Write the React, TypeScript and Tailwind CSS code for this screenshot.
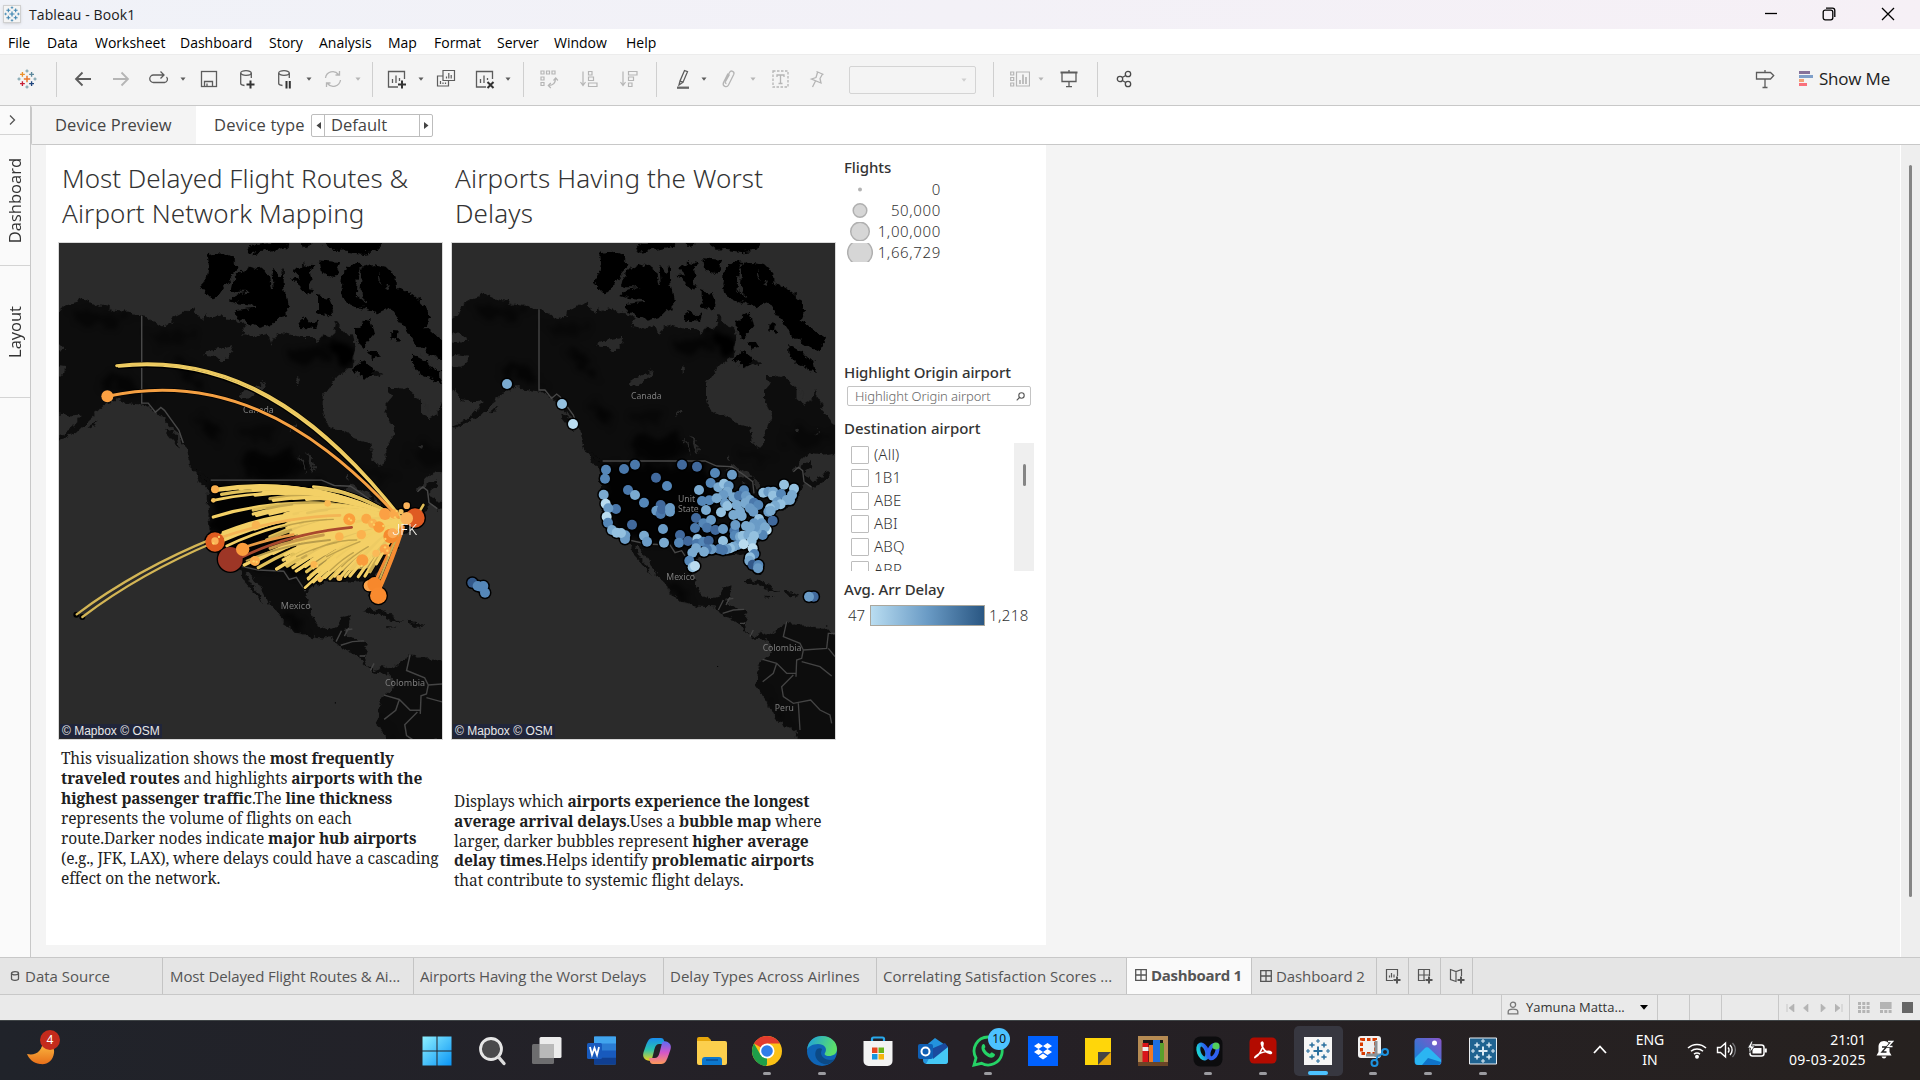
import React from "react";

type Pt = [number, number];

const SANS = "font-['Open_Sans','Noto_Sans',sans-serif]";

/* ---------- small helpers ---------- */

function Ico({ children, className = "", size = 20 }: { children: React.ReactNode; className?: string; size?: number }) {
  return (
    <svg width={size} height={size} viewBox={`0 0 ${size} ${size}`} fill="none" stroke="currentColor" strokeWidth={1.3} className={"block shrink-0 " + className}>
      {children}
    </svg>
  );
}

function Caret({ className = "" }: { className?: string }) {
  return (
    <svg width="8" height="8" viewBox="0 0 8 8" className={"block shrink-0 " + className}>
      <path d="M1.5 2.5h5L4 5.8z" fill="currentColor" />
    </svg>
  );
}

const Sep = ({ className = "" }: { className?: string }) => <div className={"h-[35px] w-px shrink-0 bg-[#cfcfcf] " + className} />;

function plus(cx: number, cy: number, r: number) {
  return `M${cx - r} ${cy}h${r * 2}M${cx} ${cy - r}v${r * 2}`;
}

/* the cluster-of-crosses mark */
function Crosses({ size, colors, className = "" }: { size: number; colors: string[]; className?: string }) {
  const [mid, a, b, c, d, s] = colors;
  return (
    <svg width={size} height={size} viewBox="0 0 24 24" fill="none" className={"block shrink-0 " + className}>
      <path d={plus(12, 12, 3.8)} stroke={mid} strokeWidth="1.8" />
      <path d={plus(6.5, 6.5, 2.9)} stroke={a} strokeWidth="1.6" />
      <path d={plus(17.5, 6.5, 2.9)} stroke={b} strokeWidth="1.6" />
      <path d={plus(6.5, 17.5, 2.9)} stroke={c} strokeWidth="1.6" />
      <path d={plus(17.5, 17.5, 2.9)} stroke={d} strokeWidth="1.6" />
      <path d={plus(12, 2.4, 1.9) + plus(12, 21.6, 1.9) + plus(2.4, 12, 1.9) + plus(21.6, 12, 1.9)} stroke={s} strokeWidth="1.2" />
    </svg>
  );
}

/* ---------- base map ---------- */

const MAINLAND =
  "M20 265L50 258L60 235L70 225L95 208L120 202L130 188L150 200L165 205L178 212L200 215L225 225L265 228L297 240L315 243L340 258L355 267L375 262L385 240L410 232L425 222L440 215L450 235L470 250L476 228L480 245L500 238L515 235L530 245L560 250L590 265L575 280L580 292L610 298L640 285L650 300L656 324L662 300L680 285L705 290L740 297L770 297L785 312L800 290L820 300L830 285L835 250L850 275L865 290L875 285L880 310L890 315L882 350L878 385L860 390L840 405L820 430L798 460L798 510L815 545L850 555L880 575L915 587L930 590L938 635L955 655L970 650L968 610L985 590L995 560L985 530L975 510L975 480L988 465L978 435L1010 435L1035 445L1055 455L1070 480L1070 505L1095 522L1115 510L1122 480L1140 515L1155 550L1175 580L1215 610L1215 665L1140 675L1100 672L1080 692L1065 712L1060 725L1085 705L1110 690L1115 715L1090 735L1110 745L1130 752L1160 720L1172 728L1145 760L1120 775L1095 760L1080 785L1062 825L1020 838L1000 860L1005 880L985 920L955 940L942 962L960 1000L968 1030L946 1030L925 1005L910 968L860 975L810 975L780 982L755 1005L757 1030L765 1060L785 1093L815 1102L840 1095L850 1072L882 1066L873 1092L862 1108L868 1126L900 1138L922 1144L912 1180L920 1205L940 1220L965 1205L985 1216L1000 1205L1020 1185L1045 1175L1055 1187L1100 1186L1130 1195L1165 1196L1215 1240L1215 1560L1090 1560L1066 1506L1010 1470L975 1410L947 1362L950 1325L965 1290L990 1268L998 1250L985 1228L970 1228L940 1226L915 1206L895 1186L885 1170L850 1155L825 1132L780 1130L730 1118L685 1085L680 1065L655 1040L625 995L595 948L585 948L600 980L625 1010L636 1044L610 1005L582 975L565 945L520 915L495 875L485 830L480 770L480 725L476 715L458 695L440 665L430 630L415 590L400 565L370 540L340 505L305 485L260 480L235 468L200 478L180 500L150 525L120 555L80 578L45 597L38 590L75 570L110 545L128 515L100 516L60 510L42 480L20 470L20 415L80 402L85 380L20 372L20 340L88 335L60 315L20 300Z";

const ISLANDS =
  "M478 70L515 65L545 78L572 105L550 125L530 150L508 185L490 190L480 180L462 158L475 130L480 95Z" +
  "M575 115L600 100L625 108L648 125L655 165L662 160L658 105L670 115L680 130L690 105L690 150L695 180L700 205L705 235L680 240L660 260L620 272L600 262L555 240L560 222L612 216L614 211L570 207L538 197L560 180L600 172L560 172L540 166L545 145L560 130Z" +
  "M585 60L600 42L640 36L715 30L690 50L640 62L600 68ZM735 30L765 30L757 50L740 50Z" +
  "M790 30L962 30L950 62L910 67L860 60L830 62L815 50Z" +
  "M715 115L740 92L775 100L765 115L770 140L760 150L775 170L750 180L735 155L710 138L735 135Z" +
  "M790 85L848 90L835 120L815 135L795 120Z" +
  "M785 180L815 190L830 225L810 245L785 230ZM730 255L750 240L765 262L785 250L780 275L735 272Z" +
  "M855 115L880 95L905 98L892 135L890 180L920 205L890 215L860 202L850 165Z" +
  "M905 105L940 98L975 105L1000 130L1000 155L1045 180L1080 210L1095 245L1085 270L1120 300L1155 325L1140 367L1100 345L1060 320L1040 290L1010 250L985 215L950 230L900 215L918 200L900 165Z" +
  "M890 270L930 250L940 290L910 328L890 308Z" +
  "M878 395L900 360L930 378L948 400L915 415L895 400Z" +
  "M1045 345L1085 365L1120 395L1128 432L1095 412L1065 400L1045 370Z" +
  "M985 280L1008 282L1005 308L985 300ZM925 335L960 350L935 358Z";

const ISLETS =
  "M908 1058L935 1048L975 1060L1000 1075L1018 1082L985 1080L955 1062ZM1030 1082L1060 1090L1085 1098L1045 1102ZM978 1100L998 1102L985 1106ZM150 545L175 530L165 548ZM360 545L385 560L395 580L400 610L388 590L366 565ZM436 664L450 662L486 695L478 700ZM930 398L945 390L960 400L945 408Z";

const LAKES =
  "M470 345L500 330L550 320L542 345L522 370L505 352L480 350ZM562 458L590 440L640 420L622 445L592 468L570 466ZM705 560L718 530L722 545ZM728 622L745 640L752 672L740 650ZM752 612L770 640L778 668L762 655ZM860 690L866 676L870 695ZM718 412L730 405L732 425ZM1062 598L1080 600L1072 615ZM1120 608L1138 600L1132 612Z" +
  "M850 722L880 706L925 730L935 745L900 742L865 730ZM905 752L916 760L912 800L902 790ZM940 745L960 760L970 790L950 782ZM960 800L1000 790L985 800Z" +
  "M965 160L985 150L975 170ZM950 120L960 150L952 140ZM1070 345L1110 385L1100 385ZM1075 470L1100 500L1085 505Z";

const BORDERS =
  "M297 238V480L315 480L335 505L350 492L360 500L378 525L400 555L412 590M488 693H795L830 708L875 710L905 730L938 755L942 790M1060 725L1075 712L1088 722L1092 755L1115 772M545 925L620 942L690 945L705 968L725 962L750 1000";

const BORDERS_S =
  "M850 1110L835 1140M870 1102L858 1125M862 1108L880 1105M848 1150L880 1140L912 1138M900 1180L915 1180M930 1220L940 1200M1040 1175L1030 1220L1080 1240L1090 1260L1085 1285L1070 1290L1068 1340M1090 1260L1160 1255L1165 1210L1185 1210M1165 1255L1185 1280M968 1288L1010 1300L1040 1330L1068 1330M968 1355L1000 1330L1010 1300M1060 1335L1025 1370L1030 1400L1060 1420L1112 1410L1140 1440L1170 1455L1175 1480M1075 1420L1080 1500M1085 1295L1140 1310L1175 1338";

function BaseMap({ id }: { id: string }) {
  return (
    <>
      <defs>
        <filter id={id + "-rough"} x="0" y="0" width="1300" height="1600" filterUnits="userSpaceOnUse">
          <feTurbulence type="fractalNoise" baseFrequency="0.045" numOctaves="4" seed="4" result="n" />
          <feDisplacementMap in="SourceGraphic" in2="n" scale="24" xChannelSelector="R" yChannelSelector="G" />
        </filter>
        <filter id={id + "-soft"} x="-20%" y="-20%" width="140%" height="140%">
          <feTurbulence type="fractalNoise" baseFrequency="0.03" numOctaves="3" seed="8" result="n" />
          <feDisplacementMap in="SourceGraphic" in2="n" scale="70" xChannelSelector="R" yChannelSelector="G" result="d" />
          <feGaussianBlur in="d" stdDeviation="8" />
        </filter>
        <clipPath id={id + "-land"}>
          <path d={MAINLAND} />
        </clipPath>
      </defs>
      <g filter={`url(#${id}-rough)`}>
        <path d={MAINLAND} fill="#111111" />
      </g>
      <g clipPath={`url(#${id}-land)`}>
        <g filter={`url(#${id}-soft)`} fill="#040404">
          <path d="M170 415L260 400L310 460L250 450L190 435ZM380 360L430 370L470 440L430 420Z" opacity="0.6" />
          <path d="M580 610L720 610L740 690L590 690Z" opacity="0.7" />
          <path d="M790 290L880 320L880 390L820 340Z" />
          <path d="M100 220L280 240L220 270L120 260Z" opacity="0.45" />
          <path d="M490 705L790 705L830 780L780 960L540 920L500 850Z" opacity="0.8" />
          <path d="M450 510L480 530L520 600L470 560ZM690 1050L760 1110L700 1090ZM960 1340L1010 1450L1060 1500L990 1420ZM700 330L800 320L820 360L720 380Z" opacity="0.6" />
          <path d="M1030 600L1180 610L1150 650L1040 640ZM880 660L1000 680L960 700ZM560 560L640 540L660 570L600 590ZM320 290L420 280L440 310L340 320Z" opacity="0.35" />
        </g>
      </g>
      <g filter={`url(#${id}-rough)`}>
        <path d={ISLANDS} fill="#050505" />
        <path d={ISLETS} fill="#0c0c0c" />
        <path d={LAKES} fill="#2b2b2b" />
      </g>
      <path d={BORDERS} fill="none" stroke="#484848" strokeWidth="4" />
      <path d={BORDERS_S} fill="none" stroke="#444" strokeWidth="4" />
      <path d="M833 1308v3M1158 1188h4" stroke="#000" strokeWidth="3" />
    </>
  );
}

const LABEL = "font-['Noto_Sans',sans-serif] fill-[#7d7d7d]";

/* ---------- route map ---------- */

const HUB: Pt = [1088, 248];
const ROUTES: Pt[] = [
  [525, 148], [535, 150], [545, 163], [520, 181], [640, 150], [690, 176], [700, 181], [645, 165], [820, 140], [825, 145],
  [560, 147], [600, 146], [670, 158], [760, 176], [800, 178],
  [520, 231], [640, 210], [640, 222], [680, 206], [710, 212], [760, 206], [650, 226], [735, 222], [740, 230], [690, 222],
  [545, 285], [550, 278], [555, 290], [560, 318], [552, 300], [690, 290], [680, 300], [648, 255], [645, 268], [570, 276], [600, 272],
  [613, 375], [655, 383], [640, 368], [710, 387], [730, 360], [740, 375], [735, 345], [790, 378], [800, 395], [700, 340], [720, 325],
  [805, 415], [795, 443], [820, 425], [840, 422], [870, 416], [898, 415], [915, 410], [930, 408], [955, 410], [975, 408], [990, 395],
  [812, 405], [830, 412], [855, 412], [884, 408], [835, 395],
];

function bulk(): Pt[] {
  const out: Pt[] = [];
  let s = 17;
  const rnd = () => (s = (s * 16807) % 2147483647) / 2147483647;
  for (let i = 0; i < 110; i++) {
    const x = 740 + rnd() * 270;
    const lo = 205 + (x - 740) * 0.05;
    out.push([Math.round(x), Math.round(lo + rnd() * (398 - lo))]);
  }
  return out;
}
const BULK = bulk();

function arc([x, y]: Pt, [hx, hy]: Pt = HUB) {
  const dx = hx - x;
  const lift = dx * 0.17 * (y > 330 ? 0.8 : 1);
  return `M${x} ${y}Q${(x + hx) / 2} ${((y + hy) / 2 - lift).toFixed(1)} ${hx} ${hy}`;
}

const HUBS: [number, number, number, string][] = [
  [525, 148, 12, "#fbb04f"], [520, 181, 7, "#f6c15c"], [525, 306, 29, "#de5c20"], [571, 358, 37, "#9d3626"],
  [608, 328, 20, "#fb9c3d"], [645, 363, 15, "#fbab4a"], [648, 255, 13, "#f9b451"], [863, 190, 10, "#fab951"],
  [928, 238, 18, "#fb9f3c"], [979, 236, 15, "#faa845"], [998, 250, 14, "#f9b250"], [1017, 261, 17, "#fa9a38"],
  [1035, 222, 18, "#fba044"], [1062, 222, 14, "#faa94a"], [964, 284, 14, "#fbb24e"], [898, 290, 13, "#fab34f"],
  [1052, 288, 22, "#f68a2e"], [1058, 280, 15, "#fbab56"], [1035, 328, 16, "#faa347"], [967, 361, 18, "#fa9c3c"],
  [1008, 340, 11, "#fbb957"], [822, 374, 11, "#fbb64f"], [840, 418, 8, "#f6c15c"], [898, 414, 9, "#f6c15c"],
  [988, 437, 17, "#fba44d"], [1004, 433, 22, "#f7882c"], [1015, 467, 25, "#f98a2e"], [1125, 234, 29, "#df5a22"],
  [1100, 197, 10, "#fbb35a"], [1100, 235, 19, "#fbb35a"], [1083, 215, 8, "#f6c15c"],
];

const SPECKS: Pt[] = [[927, 236], [933, 241], [995, 246], [1002, 254], [1030, 258], [1035, 322], [1042, 332], [1028, 340], [1046, 345], [965, 378], [641, 364], [650, 366], [820, 385], [832, 378], [1036, 297], [1065, 232], [1070, 213], [520, 310], [537, 291]];

function RouteMap() {
  const arcs = [...ROUTES, ...BULK].map((p) => arc(p));
  const long = [
    ["M230 -223C560 -262 830 -95 1088 240", "#ecc95f", 9],
    ["M236 -219C560 -254 824 -89 1084 238", "#f3d268", 5],
    ["M202 -131C520 -200 800 -72 1075 232", "#f5a043", 9],
    ["M110 523Q290 388 525 293", "#d3b555", 7],
    ["M127 531Q300 400 525 306", "#d3b555", 7],
    ["M1140 212L1150 195", "#e0bd58", 8],
    ["M805 418Q930 290 1088 248", "#f3d064", 8],
  ] as const;
  return (
    <svg width="383" height="496" viewBox="0 0 383 496" className="block bg-[#2b2b2b]">
      <g transform="translate(-11.6 0.8) scale(1.084) scale(.33333) translate(-36 -39)">
        <BaseMap id="m1" />
      </g>
      <g transform="scale(.33333) translate(-57 591)">
        <text x="655" y="-82" textAnchor="middle" fontSize="26" className={LABEL}>Canada</text>
        <text x="767" y="506" textAnchor="middle" fontSize="27" className={LABEL}>Mexico</text>
        <text x="1095" y="737" textAnchor="middle" fontSize="27" className={LABEL}>Colombia</text>
        <g fill="none" strokeLinecap="round" stroke="#000">
          {arcs.map((d, i) => <path key={i} d={d} strokeWidth="14" />)}
          {long.map(([d], i) => <path key={"l" + i} d={d} strokeWidth={i < 3 || i > 4 ? 13 : 0} />)}
          {HUBS.map(([x, y, r], i) => <circle key={i} cx={x} cy={y} r={r + 4} fill="#000" stroke="none" />)}
          <circle cx="109" cy="524" r="9" fill="#000" stroke="none" />
          <circle cx="127" cy="531" r="9" fill="#000" stroke="none" />
        </g>
        <g fill="none" strokeLinecap="round">
          {arcs.map((d, i) => (
            <path key={i} d={d} strokeWidth={i % 5 === 3 ? 8 : 10} stroke={i % 7 === 2 ? "#e0c05a" : i % 13 === 5 ? "#c6a850" : "#f3d066"} />
          ))}
          <path d="M760 192Q940 190 1080 250L1080 262L985 385L880 395L830 385L790 330L740 240Z" fill="#f3d066" stroke="none" opacity="0.7" />
          {long.map(([d, c, w], i) => <path key={"l" + i} d={d} stroke={c} strokeWidth={w} />)}
          <path d="M625 318Q700 295 760 284" stroke="#e89a45" strokeWidth="8" />
          <path d="M550 290Q730 230 900 226" stroke="#f3b555" strokeWidth="8" />
          <path d="M605 352Q750 280 935 262" stroke="#a9492e" strokeWidth="8" />
          <path d="M690 325Q760 300 850 285" stroke="#c89b4c" strokeWidth="9" />
          <path d="M620 362Q730 312 870 300" stroke="#b99d4c" strokeWidth="6" />
          <path d="M860 350Q920 320 960 305M905 380Q940 345 985 320M820 330Q880 300 950 300M720 262Q800 240 880 238M770 350Q830 320 890 308M870 392Q910 355 940 338" stroke="#bfa24c" strokeWidth="4" />
          <path d="M1012 460Q1060 350 1088 262" stroke="#f68d33" strokeWidth="13" />
          <path d="M1003 430Q1040 350 1080 270" stroke="#f08a35" strokeWidth="9" />
          <path d="M1020 415Q1050 340 1078 275" stroke="#cdae52" strokeWidth="6" />
        </g>
        {HUBS.map(([x, y, r, c], i) => <circle key={i} cx={x} cy={y} r={r} fill={c} />)}
        <circle cx="202" cy="-131" r="18" fill="#fba143" />
        <circle cx="525" cy="303" r="11" fill="#fbb257" />
        {SPECKS.map(([x, y], i) => <circle key={i} cx={x} cy={y} r="3.5" fill="#fbd063" />)}
        <text x="1057" y="284" fontSize="43" className="fill-[#fbf8f0] font-['Roboto',sans-serif] font-light">JFK</text>
      </g>
    </svg>
  );
}

/* ---------- delay map ---------- */

const SHADES = ["#b9dcf0", "#94c1e0", "#7aaad0", "#6a9bc6", "#5587b8", "#4a78ab", "#41699c", "#33598a"];

/* x, y, shade */
const AIRPORTS: [number, number, number][] = [
  [201, -168, 2], [366, -108, 1], [399, -48, 0],
  [498, 89, 4], [495, 116, 4], [552, 87, 5], [585, 74, 5], [726, 74, 6], [771, 80, 6], [825, 99, 4], [876, 104, 3], [648, 113, 6], [681, 138, 4],
  [564, 150, 5], [585, 165, 2], [612, 188, 4], [491, 164, 2], [497, 191, 0], [528, 207, 5], [505, 205, 3], [500, 230, 0], [504, 248, 4],
  [576, 254, 6], [516, 270, 2], [530, 278, 1], [556, 286, 3], [555, 297, 3], [543, 279, 1], [662, 195, 6], [649, 212, 3], [662, 222, 5], [666, 208, 6], [690, 204, 3], [690, 215, 3],
  [669, 267, 3], [612, 287, 2], [621, 305, 3], [672, 308, 2], [720, 285, 6], [717, 308, 4], [744, 303, 6], [777, 150, 2], [786, 183, 4], [798, 210, 2], [768, 234, 6], [765, 264, 5], [812, 129, 4],
  [808, 181, 4], [790, 250, 4], [813, 240, 3], [801, 263, 5], [826, 270, 6], [849, 267, 3], [772, 297, 1], [770, 311, 5], [790, 305, 4], [806, 302, 6], [849, 303, 1],
  [835, 142, 2], [852, 131, 1], [866, 138, 3], [862, 155, 2], [850, 165, 3], [830, 175, 2], [843, 217, 1], [855, 190, 3], [862, 198, 1], [880, 172, 2], [912, 151, 4], [897, 167, 5], [918, 168, 3], [915, 190, 2], [890, 195, 2],
  [880, 225, 2], [900, 215, 2], [905, 228, 2], [930, 180, 2], [942, 188, 5], [955, 195, 4], [930, 205, 3], [940, 215, 3],
  [970, 158, 1], [985, 155, 3], [1000, 155, 2], [999, 167, 1], [1032, 134, 1], [1062, 146, 1], [1056, 165, 2], [1050, 180, 2], [1023, 162, 4], [1040, 180, 2], [1012, 186, 3], [1022, 193, 1], [1005, 197, 2], [990, 205, 1], [985, 215, 3], [992, 212, 2],
  [998, 242, 6], [980, 270, 0], [957, 237, 1], [965, 250, 3], [975, 262, 2], [968, 285, 4], [942, 250, 3], [950, 270, 2], [945, 262, 3], [918, 258, 2], [930, 262, 2], [883, 272, 5], [886, 255, 3], [884, 287, 4], [900, 290, 2], [908, 287, 1],
  [925, 285, 2], [942, 288, 1], [935, 303, 1], [938, 325, 0], [893, 315, 3], [911, 313, 0], [880, 320, 2], [870, 325, 1], [860, 328, 3], [849, 330, 5], [838, 327, 5], [815, 328, 3], [800, 328, 5], [792, 335, 2], [768, 325, 2], [757, 338, 2], [748, 362, 4], [758, 382, 1], [765, 378, 0],
  [943, 342, 4], [930, 352, 1], [928, 362, 2], [938, 374, 7], [955, 375, 4], [954, 385, 3],
  [97, 428, 7], [113, 438, 4], [130, 438, 4], [122, 440, 4], [135, 458, 4], [1121, 470, 6], [1107, 470, 3],
];

function DelayMap() {
  return (
    <svg width="383" height="496" viewBox="0 0 383 496" className="block bg-[#2b2b2b]">
      <g transform="scale(.33333) translate(-36 -39)">
        <BaseMap id="m2" />
      </g>
      <g transform="scale(.33333) translate(-36 591)">
        <text x="619" y="-124" textAnchor="middle" fontSize="26" className={LABEL}>Canada</text>
        <text x="714" y="185" fontSize="26" className={LABEL}>Unit</text>
        <text x="714" y="215" fontSize="26" className={LABEL}>State</text>
        <text x="722" y="419" textAnchor="middle" fontSize="26" className={LABEL}>Mexico</text>
        <text x="1026" y="632" textAnchor="middle" fontSize="26" className={LABEL}>Colombia</text>
        <text x="1033" y="812" textAnchor="middle" fontSize="26" className={LABEL}>Peru</text>
        {AIRPORTS.map(([x, y], i) => <circle key={i} cx={x} cy={y} r="19.5" fill="#000" />)}
        {AIRPORTS.map(([x, y, s], i) => <circle key={i} cx={x} cy={y} r="15" fill={SHADES[s]} />)}
      </g>
    </svg>
  );
}

function MapFrame({ children }: { children: React.ReactNode }) {
  return (
    <div className="relative h-[498px] w-[385px] border border-[#d9d9d9]">
      {children}
      <div className="absolute bottom-px left-[1px] h-[14px] bg-[#20253a] px-[2px] font-['Liberation_Sans',sans-serif] text-[12px] leading-[14px] whitespace-nowrap text-[#e8e8e8]">
        © Mapbox © OSM
      </div>
    </div>
  );
}

/* ---------- top bars ---------- */

function TitleBar() {
  return (
    <div className="flex h-[29px] items-center bg-linear-to-r from-[#f0f2f8] to-[#f6f0f6] pb-px pl-[3px]">
      <div className="flex size-[18px] items-center justify-center border border-[#d0d0d0] bg-[#f4f4f4] shadow-sm">
        <Crosses size={16} colors={["#3d84b0", "#3d84b0", "#3d84b0", "#3d84b0", "#3d84b0", "#3d84b0"]} />
      </div>
      <span className="ml-2 text-[14px] tracking-[0.100px] text-[#1b1b1b]">Tableau - Book1</span>
      <div className="ml-auto flex items-center pr-[25px] text-black">
        <Ico size={14}><path d="M1 6.5h12" /></Ico>
        <Ico size={14} className="ml-[44px]">
          <rect x="1.2" y="3.2" width="9.6" height="9.6" rx="2" />
          <path d="M4 1.2h6.500a2.300 2.300 0 0 1 2.300 2.300V10" />
        </Ico>
        <Ico size={14} className="ml-[45px]"><path d="M1 1l12 12M13 1L1 13" /></Ico>
      </div>
    </div>
  );
}

function MenuBar() {
  const items = [
    ["File", "w-[39px]"], ["Data", "w-[48px]"], ["Worksheet", "w-[85px]"], ["Dashboard", "w-[89px]"], ["Story", "w-[50px]"], ["Analysis", "w-[69px]"],
    ["Map", "w-[46px]"], ["Format", "w-[63px]"], ["Server", "w-[57px]"], ["Window", "w-[72px]"], ["Help", "w-[40px]"],
  ];
  return (
    <div className="flex h-[25px] items-center bg-white pt-[2px] pl-2 text-[14px] text-black">
      {items.map(([t, w]) => <span key={t} className={"shrink-0 whitespace-nowrap " + w}>{t}</span>)}
    </div>
  );
}

function Toolbar() {
  const dim = "text-[#b5b5b5]";
  return (
    <div className="flex h-[52px] items-center border-t border-b border-t-[#ececec] border-b-[#c8c8c8] bg-[#f4f4f4] pb-[2px] pl-[17px] text-[#5c5c5c]">
      <Crosses size={20} colors={["#e8762c", "#eb912c", "#5b879b", "#c72037", "#1f457e", "#7199a6"]} />
      <Sep className="ml-[19px]" />
      <Ico className="ml-4"><path d="M18 10H3M9.500 3.500L3 10l6.500 6.500" strokeWidth="1.800" /></Ico>
      <Ico className={"ml-[18px] " + dim}><path d="M2 10h15M10.500 3.500L17 10l-6.500 6.500" strokeWidth="1.800" /></Ico>
      <Ico className="ml-[18px]"><path d="M15 6H4.500a3.500 3.500 0 0 0 0 7.500h11a3.200 3.200 0 0 0 2-5.500M11.500 2.500L15 6l-3.500 3.500" /></Ico>
      <Caret className="ml-[10px]" />
      <Ico className="ml-3"><rect x="2.500" y="2.500" width="15" height="15" /><path d="M5.500 17.500v-5h8v5M8 17.500v-3" /></Ico>
      <Ico className="ml-[18px]"><ellipse cx="9" cy="4" rx="5.300" ry="2.300" /><path d="M3.700 4v10.500c0 1 1.500 1.700 3.800 2M14.300 4v5" /><path d="M9.500 15.500h8M13.500 11.500v8" stroke="#333" strokeWidth="2" /></Ico>
      <Ico className="ml-[18px]"><ellipse cx="9" cy="4" rx="5.300" ry="2.300" /><path d="M3.700 4v10.500c0 1 1.500 1.700 3.800 2M14.300 4v5" /><path d="M11.500 12v7.500M14.800 12v7.500" stroke="#333" strokeWidth="2" /></Ico>
      <Caret className="ml-[10px]" />
      <Ico className={"ml-[10px] " + dim}><path d="M2.500 9a7.300 7.300 0 0 1 13-3.500M17.500 11a7.300 7.300 0 0 1-13 3.500M12.500 6h4V2M7.500 14h-4v4" /></Ico>
      <Caret className={"ml-[11px] " + dim} />
      <Sep className="ml-[10px]" />
      <Ico className="ml-[14px]"><path d="M17.500 10V2.500h-16v15.500H11M5.500 14V10M9 14V6.500M12.500 12V9" /><path d="M11 15.500h8M15 11.500v8" stroke="#333" strokeWidth="2" /></Ico>
      <Caret className="ml-[10px]" />
      <Ico className="ml-[11px]"><path d="M7 1.500h11.500v10H7zM7 7H1.500v10h11v-5.500M10.500 9.500V7.500M12.800 9.500V4M15.200 9.500V6M4.500 15v-3M7 15v-1.500M9.500 15v-1.500" strokeWidth="1.200" /></Ico>
      <Ico className="ml-[19px]"><path d="M17.500 10V2.500h-16v15.500H11M5.500 14V10M9 14V6.500M12.500 11V9" /><path d="M12.500 13l6 6M18.500 13l-6 6" stroke="#333" strokeWidth="2" /></Ico>
      <Caret className="ml-[9px]" />
      <Sep className="ml-[11px]" />
      <Ico className={"ml-[15px] " + dim}><path d="M2 2h3v3H2zM7.500 2h3v3h-3zM13 2h3v3h-3zM2 8h3v3H2zM2 13.500h3v3H2zM9.500 16.500c4 0 7-2 7-7M14.500 11.500l2.200-2.500 2.200 2.500M11.800 14l-2.500 2.500 2.500 2.500" strokeWidth="1.200" /></Ico>
      <Ico className={"ml-5 " + dim}><path d="M4 2.500v13M1.500 13L4 16.500 6.500 13M9.500 2.500h3.500v3.500H9.500zM9.500 8h5v3.500h-5zM9.500 14H18v3.500H9.500z" strokeWidth="1.200" /></Ico>
      <Ico className={"ml-5 " + dim}><path d="M4 2.500v13M1.500 13L4 16.500 6.500 13M9.500 2.500H18v3.500H9.500zM9.500 8h5v3.500h-5zM9.500 14H13v3.500H9.500z" strokeWidth="1.200" /></Ico>
      <Sep className="ml-[17px]" />
      <Ico className="ml-4"><path d="M11.500 1.500l3 1.200-4.500 10.500-3-1.200zM7 12l-1 4 4-2.800" /><path d="M4 18.700h12" stroke="#666" strokeWidth="2.300" /></Ico>
      <Caret className="ml-[7px]" />
      <Ico className={"ml-[11px] " + dim}><path d="M6 12l4.500-8.500c1.500-2.800 5.500-1 4.200 2L9.500 16c-1.500 3-6.500 1.500-5-2.500l4.500-9M7.500 14.500c-1.500 0-1.500-1-1-2l4-7" /></Ico>
      <Caret className={"ml-[10px] " + dim} />
      <Ico className={"ml-[13px] " + dim}><rect x="3" y="2" width="15" height="16" strokeDasharray="2.500 1.500" /><path d="M7 8V6h7v2M10.500 6v8.500M8.500 14.500h4" /></Ico>
      <Ico className={"ml-[18px] " + dim}><path d="M8.500 2.500l7 3M9.500 3.500L8 8.500l-4.500 1.500 9.500 4-1-4.500 2.500-4.500M7.500 12l-3 6" /></Ico>
      <div className="mt-[2px] ml-[21px] flex h-7 w-[127px] items-center justify-end rounded-[2px] border border-[#d4d4d4] pr-[7px]">
        <Caret className="text-[#cfcfcf]" />
      </div>
      <Sep className="ml-[17px]" />
      <Ico className={"ml-4 " + dim}><path d="M.7 3h3v3h-3zM.7 8.500h3v3h-3zM.7 14h3v3h-3zM6.500 3h13v14h-13z" strokeWidth="1.200" /><path d="M10 15v-4M13 15V5.500M16 15V8" strokeWidth="1.700" /></Ico>
      <Caret className={"ml-[7px] " + dim} />
      <Ico className="ml-[14px]"><path d="M3 4v8.500h14V4M10 12.500v5M7 17.700h6M10 1v3" /><path d="M1.500 3.500h17" strokeWidth="2" /></Ico>
      <Sep className="ml-[18px]" />
      <Ico className="ml-[17px] text-[#4a4a4a]"><circle cx="5" cy="10" r="2.700" /><circle cx="13" cy="5" r="2.700" /><circle cx="13" cy="15" r="2.700" /><path d="M7.300 8.500l3.400-2M7.300 11.500l3.400 2" /></Ico>
      <div className="ml-auto flex items-center pr-[29px]">
        <Ico><path d="M1.500 3.500h14l3.200 3-3.200 3.500h-14zM10 1v2.500M10 10v8.500M7.500 18.500h5" /></Ico>
        <svg width="14" height="16" viewBox="0 0 14 16" className="ml-6 block">
          <path d="M0 0h11v3H0z" fill="#86729a" /><path d="M0 4h14v3H0z" fill="#7f9fc9" /><path d="M0 8h5v3H0z" fill="#f2a277" /><path d="M0 12h8v3H0z" fill="#f9707c" />
        </svg>
        <span className="ml-[6px] w-[72px] text-[17px] leading-5 tracking-[-0.2px] whitespace-nowrap text-[#222]">Show Me</span>
      </div>
    </div>
  );
}

function DeviceBar() {
  return (
    <div className="flex h-[39px] shrink-0 items-center rounded-l-[2px] border-b border-l border-[#c8c8c8] bg-white text-[16.500px] text-[#444]">
      <div className="flex h-full w-[164px] items-center bg-[#f4f4f4] pl-[23px] tracking-[0.080px] whitespace-nowrap">Device Preview</div>
      <span className="ml-[18px] w-[97px] tracking-[0.200px] whitespace-nowrap">Device type</span>
      <div className="flex h-[23px] w-[122px] items-center rounded-[2px] border border-[#bdbdbd] bg-white">
        <div className="flex h-full w-[13px] items-center justify-center border-r border-[#bdbdbd]">
          <svg width="5" height="7" viewBox="0 0 5 7"><path d="M5 0v7L0.500 3.500z" fill="#444" /></svg>
        </div>
        <span className="flex-1 pl-[6px]">Default</span>
        <div className="flex h-full w-[13px] items-center justify-center border-l border-[#bdbdbd]">
          <svg width="5" height="7" viewBox="0 0 5 7"><path d="M0 0v7l4.500-3.500z" fill="#444" /></svg>
        </div>
      </div>
    </div>
  );
}

function SideRail() {
  const v = "[writing-mode:vertical-rl] rotate-180 text-[16.500px] text-[#333]";
  return (
    <div className="flex w-[31px] shrink-0 flex-col border-r border-[#c8c8c8] bg-[#fafafa]">
      <div className="flex h-[28px] items-center pl-[8px] text-[#555]">
        <Ico size={12}><path d="M2 1.500l4.500 4.500L2 10.500" /></Ico>
      </div>
      <div className="flex h-[132px] items-center justify-center border-t border-b border-[#d4d4d4] pt-[2px]"><span className={v}>Dashboard</span></div>
      <div className="flex h-[132px] items-center justify-center border-b border-[#d4d4d4]"><span className={v}>Layout</span></div>
    </div>
  );
}

/* ---------- dashboard ---------- */

const TITLE = "h-[97px] pl-1 pt-[16px] font-['Noto_Sans',sans-serif] text-[26px] leading-[35px] font-light whitespace-nowrap text-[#333]";
const CAPTION = "pl-[3px] font-['Noto_Serif','Liberation_Serif',serif] text-[15.500px] tracking-[-0.130px] whitespace-nowrap text-[#1e1e1e]";

function Legends() {
  const head = "text-[15px] leading-5 font-medium tracking-[-0.080px] text-[#333] whitespace-nowrap";
  const sizes: [string, number][] = [["0", 2], ["50,000", 6.8], ["1,00,000", 9.3], ["1,66,729", 12.3]];
  return (
    <div className="ml-[8px] flex w-[192px] flex-col pt-[12px] font-['Noto_Sans',sans-serif] text-[#333]">
      <div className={head}>Flights</div>
      <div className="mt-[2px] flex flex-col">
        {sizes.map(([t, r]) => (
          <div key={t} className="flex h-[21px] items-center">
            <svg width="32" height="19" viewBox="0 0 32 19" className="block">
              <circle cx="16" cy="9.500" r={r} fill={r < 3 ? "#b3b3b3" : "#d6d6d6"} stroke={r < 3 ? "none" : "#b0b0b0"} strokeWidth="1.500" />
            </svg>
            <span className="w-[65px] text-right text-[15px] font-light tracking-[0.650px]">{t}</span>
          </div>
        ))}
      </div>
      <div className={head + " mt-[99px]"}>Highlight Origin airport</div>
      <div className="mt-[4px] ml-[3px] flex h-5 w-[184px] items-center rounded-[2px] border border-[#c4c4c4] pt-px pr-[5px] pl-[7px] text-[13px] font-light text-[#666]">
        <span className="flex-1 tracking-[-0.080px] whitespace-nowrap">Highlight Origin airport</span>
        <svg width="9" height="9" viewBox="0 0 9 9" fill="none" stroke="#555" strokeWidth="1.100"><circle cx="5.500" cy="3.500" r="2.700" /><path d="M3.500 5.500L.7 8.300" /></svg>
      </div>
      <div className={head + " mt-[12px] tracking-normal"}>Destination airport</div>
      <div className="mt-[5px] flex h-[128px] overflow-hidden">
        <div className="flex flex-1 flex-col pl-[7px]">
          {["(All)", "1B1", "ABE", "ABI", "ABQ", "ABR"].map((t) => (
            <div key={t} className="flex h-[23px] shrink-0 items-center">
              <div className="size-[18px] rounded-[1px] border border-[#bdbdbd] bg-white" />
              <span className="ml-[5px] text-[15px] font-light tracking-[0.200px]">{t}</span>
            </div>
          ))}
        </div>
        <div className="mr-[2px] w-5 bg-[#efefef] pt-[21px]"><div className="mx-auto h-[22px] w-[3px] rounded-full bg-[#858585]" /></div>
      </div>
      <div className={head + " mt-[8px]"}>Avg. Arr Delay</div>
      <div className="mt-[6px] flex h-[21px] items-center text-[15px] font-light">
        <span className="w-[22px] pl-[4px]">47</span>
        <div className="ml-[4px] h-[21px] w-[115px] shrink-0 border border-[#aaa79d] bg-linear-to-r from-[#b9ddf1] via-[#6a9bc5] to-[#2a5783]" />
        <span className="ml-[4px] tracking-[0.400px]">1,218</span>
      </div>
    </div>
  );
}

function Dashboard() {
  return (
    <div className="ml-[15px] flex h-[800px] w-[1000px] shrink-0 bg-white pl-[12px]">
      <div className="w-[393px]">
        <div className={TITLE + " tracking-[-0.020px]"}>Most Delayed Flight Routes &amp;<br /><span className="tracking-[0.100px]">Airport Network Mapping</span></div>
        <MapFrame><RouteMap /></MapFrame>
        <div className={CAPTION + " mt-[8px] leading-[20px]"}>
          This visualization shows the <b>most frequently</b><br />
          <b>traveled routes</b> and highlights <b>airports with the</b><br />
          <b>highest passenger traffic</b>.The <b>line thickness</b><br />
          represents the volume of flights on each<br />
          route.Darker nodes indicate <b>major hub airports</b><br />
          <span className="tracking-[-0.180px]">(e.g., JFK, LAX), where delays could have a cascading</span><br />
          effect on the network.
        </div>
      </div>
      <div className="w-[385px]">
        <div className={TITLE + " tracking-[0.130px]"}>Airports Having the Worst<br />Delays</div>
        <MapFrame><DelayMap /></MapFrame>
        <div className={CAPTION + " mt-[52px] leading-[19.800px]"}>
          Displays which <b>airports experience the longest</b><br />
          <b>average arrival delays</b>.Uses a <b>bubble map</b> where<br />
          larger, darker bubbles represent <b>higher average</b><br />
          <b>delay times</b>.Helps identify <b>problematic airports</b><br />
          that contribute to systemic flight delays.
        </div>
      </div>
      <Legends />
    </div>
  );
}

/* ---------- bottom ---------- */

const GridIco = ({ className = "" }: { className?: string }) => (
  <Ico size={12} className={className}><path d="M.7.7h10.600v10.600H.7zM6 .7v10.600M.7 6h10.600" /></Ico>
);

function SheetTabs() {
  const tab = "flex h-full shrink-0 items-center border-r border-[#c4c4c4] whitespace-nowrap";
  return (
    <div className="flex h-[38px] items-center border-t border-b border-[#c8c8c8] bg-[#e5e5e5] text-[15px] text-[#555]">
      <div className={tab + " w-[163px] pl-[10px]"}>
        <Ico size={10}><ellipse cx="5" cy="2.300" rx="3.500" ry="1.600" /><path d="M1.500 2.300v5.500c0 2 7 2 7 0V2.300" /></Ico>
        <span className="ml-[5px]">Data Source</span>
      </div>
      <div className={tab + " w-[251px] pl-[7px] tracking-[-0.100px]"}>Most Delayed Flight Routes &amp; Ai...</div>
      <div className={tab + " w-[250px] pl-[6px] tracking-[-0.130px]"}>Airports Having the Worst Delays</div>
      <div className={tab + " w-[213px] pl-[6px] tracking-[0.020px]"}>Delay Types Across Airlines</div>
      <div className={tab + " w-[250px] pl-[6px] tracking-[0.030px]"}>Correlating Satisfaction Scores ...</div>
      <div className={tab + " w-[125px] bg-[#fafafa] pb-[2px] pl-[8px] font-bold tracking-[-0.300px]"}><GridIco className="mr-[4px]" />Dashboard 1</div>
      <div className={tab + " w-[125px] pl-[8px] tracking-[-0.100px]"}><GridIco className="mr-[4px]" />Dashboard 2</div>
      <div className={tab + " w-[32px] justify-center"}><Ico size={16}><path d="M12.500 8V1.500h-11v11H8M4.500 9.500V7.500M6.500 9.500V5M9 9.500V6.500" strokeWidth="1.200" /><path d="M8.500 12h7M12 8.500v7" strokeWidth="2" /></Ico></div>
      <div className={tab + " w-[32px] justify-center"}><Ico size={16}><path d="M12.500 8V1.500h-11v11H8M7 1.500v11M1.500 7h11" strokeWidth="1.200" /><path d="M8.500 12h7M12 8.500v7" strokeWidth="2" /></Ico></div>
      <div className={tab + " w-[32px] justify-center"}><Ico size={16}><path d="M12.500 8V1.500L7 3.500 1.500 1.500v10L7 13.500V3.500" strokeWidth="1.200" /><path d="M8.500 12h7M12 8.500v7" strokeWidth="2" /></Ico></div>
    </div>
  );
}

function StatusBar() {
  const cell = "flex h-full shrink-0 items-center border-l border-[#c8c8c8]";
  return (
    <div className="flex h-[25px] items-center justify-end bg-[#eaeaea] pr-px text-[13px] text-[#333]">
      <div className={cell + " w-[156px] pl-[4px]"}>
        <Ico size={14} className="text-[#777]"><circle cx="7" cy="3.700" r="2.600" /><path d="M2.200 12.800v-2.300c0-3.200 9.600-3.200 9.600 0v2.300z" /></Ico>
        <span className="ml-[6px] flex-1 whitespace-nowrap">Yamuna Matta...</span>
        <svg width="8" height="5" viewBox="0 0 8 5" className="mr-[9px]"><path d="M0 0h8L4 4.800z" fill="#000" /></svg>
      </div>
      <div className={cell + " w-[32px]"} />
      <div className={cell + " w-[32px]"} />
      <div className={cell + " w-[57px]"} />
      <div className={cell + " w-[71px] justify-between pr-[5px] pl-[7px]"}>
        {["M1 0v8M8 0v8L3 4z", "M6 0v8L1.500 4z", "M2 0v8l4.500-4z", "M7 0v8M0 0v8l5-4z"].map((d) => (
          <svg key={d} width="9" height="8" viewBox="0 0 9 8"><path d={d} fill="#b4b4b4" stroke="#b4b4b4" strokeWidth="0.600" /></svg>
        ))}
      </div>
      <div className={cell + " w-[70px] gap-[10px] pl-[8px]"}>
        <svg width="12" height="11" viewBox="0 0 12 11" fill="#b4b4b4"><path d="M0 0h3v3H0zM4.300 0h3v3h-3zM8.600 0h3v3h-3zM0 4h3v3H0zM4.300 4h3v3h-3zM8.600 4h3v3h-3zM0 8h3v3H0zM4.300 8h3v3h-3zM8.600 8h3v3h-3z" /></svg>
        <svg width="12" height="11" viewBox="0 0 12 11" fill="#b4b4b4"><path d="M0 0h11.600v7H0zM0 8h3v3H0zM4.300 8h3v3h-3zM8.600 8h3v3h-3z" /></svg>
        <div className="h-[11px] w-[11px] bg-[#666]" />
      </div>
    </div>
  );
}

/* ---------- taskbar ---------- */

function App32({ children, run = false, active = false }: { children: React.ReactNode; run?: boolean; active?: boolean }) {
  return (
    <div className="flex h-full w-[55.070px] shrink-0 items-center justify-center">
      <div className={"relative flex h-[50px] w-[49px] items-center justify-center rounded-[5px]" + (active ? " bg-[#373740]" : "")}>
        <svg width="32" height="32" viewBox="0 0 32 32" fill="none" className="block">{children}</svg>
        {run && <div className="absolute bottom-px h-[3px] w-2 rounded-full bg-[#9b9ba0]" />}
        {active && <div className="absolute bottom-px h-[4px] w-5 rounded-full bg-[#4cc2ff]" />}
      </div>
    </div>
  );
}

function crossMark(color: string) {
  return (
    <g stroke={color} strokeWidth="1.500">
      <path d={plus(16, 16, 4.500)} strokeWidth="2" />
      <path d={plus(10, 10, 2.600) + plus(22, 10, 2.600) + plus(10, 22, 2.600) + plus(22, 22, 2.600)} />
      <path d={plus(16, 6, 2) + plus(16, 26, 2) + plus(6, 16, 2) + plus(26, 16, 2)} strokeWidth="1.100" />
    </g>
  );
}

function Taskbar() {
  return (
    <div className="flex h-[60px] items-center border-t border-[#3f4446] bg-linear-to-r from-[#20232a] via-[#252026] to-[#26211f] font-['Noto_Sans',sans-serif] text-white">
      <div className="relative flex w-[409.500px] shrink-0 items-center pl-[25px]">
        <svg width="34" height="34" viewBox="0 0 34 34">
          <defs><linearGradient id="moon" x1="0" y1="0" x2="0" y2="1"><stop offset="0" stopColor="#ffc94a" /><stop offset="1" stopColor="#e8701a" /></linearGradient></defs>
          <path d="M2 20C10 22 18 18 18 5c8 2 12 9 11 14-1 8-7 12-14 11C8 29 4 25 2 20z" fill="url(#moon)" />
        </svg>
        <div className="absolute -top-[4px] left-[40px] flex size-5 items-center justify-center rounded-full bg-[#c42b1c] text-[12px]">4</div>
      </div>
      <App32>
        <defs>
          <linearGradient id="win" x1="0" y1="0" x2="1" y2="1"><stop offset="0" stopColor="#8df0ff" /><stop offset="1" stopColor="#0a95f5" /></linearGradient>
          <linearGradient id="cop1" x1="0" y1="0" x2="0" y2="1"><stop offset="0" stopColor="#1a8df0" /><stop offset=".5" stopColor="#28c2b0" /><stop offset="1" stopColor="#f2d11a" /></linearGradient>
          <linearGradient id="cop2" x1="0" y1="0" x2="0" y2="1"><stop offset="0" stopColor="#5a6cf5" /><stop offset=".5" stopColor="#d556c8" /><stop offset="1" stopColor="#ff9a5a" /></linearGradient>
          <linearGradient id="edge" x1="0" y1="0" x2="1" y2="0.300"><stop offset="0" stopColor="#1b9de2" /><stop offset="1" stopColor="#5be06a" /></linearGradient>
          <linearGradient id="photo" x1="0" y1="1" x2="1" y2="0"><stop offset="0" stopColor="#0a84d8" /><stop offset="1" stopColor="#8a55c8" /></linearGradient>
          <linearGradient id="webex" x1="0" y1="0" x2="1" y2="0"><stop offset="0" stopColor="#1cd0d8" /><stop offset="1" stopColor="#2a5bf0" /></linearGradient>
        </defs>
        <path d="M1.500 1.500h14v14h-14zM16.500 1.500h14v14h-14zM1.500 16.500h14v14h-14zM16.500 16.500h14v14h-14z" fill="url(#win)" />
      </App32>
      <App32><circle cx="15" cy="14" r="10.500" fill="#4a4a4c" stroke="#e6e6e6" strokeWidth="2.800" /><path d="M22.500 22L28 28.500" stroke="#dcdcdc" strokeWidth="3.400" strokeLinecap="round" /></App32>
      <App32><rect x="8.500" y="2" width="22" height="21" rx="1.500" fill="#ececec" /><rect x="1" y="9" width="22" height="20" rx="1.500" fill="#6d6d6f" /><path d="M8.500 9H23v14H8.500z" fill="#b9b9b9" /></App32>
      <App32><rect x="8" y="1.500" width="22" height="28" rx="1.500" fill="#2b7cd3" /><path d="M8 1.500h22v7H8z" fill="#41a5ee" /><path d="M8 15.500h22v7H8z" fill="#185abd" /><path d="M8 22.500h22v7H8z" fill="#103f91" /><rect x="1" y="8" width="15" height="16" rx="1.500" fill="#185abd" /><path d="M4 12l2 8 2.500-7 2.500 7 2-8" stroke="#fff" strokeWidth="1.800" /></App32>
      <App32><path d="M12 3h8c3 0 3 3 4 6h-6c-3 0-4 3-5 7l-2 8c-1 3-6 2-8-1-2-3 0-7 1-10C6 8 7 3 12 3z" fill="url(#cop1)" /><path d="M20 29h-8c-3 0-3-3-4-6h6c3 0 4-3 5-7l2-8c1-3 6-2 8 1 2 3 0 7-1 10-2 5-3 10-8 10z" fill="url(#cop2)" /></App32>
      <App32><path d="M1 4a2 2 0 0 1 2-2h9l3 3v6H1z" fill="#e5a50a" /><path d="M1 6h28a2 2 0 0 1 2 2v20a2 2 0 0 1-2 2H3a2 2 0 0 1-2-2z" fill="#fccf4d" /><path d="M6 30v-5a3 3 0 0 1 3-3h14a3 3 0 0 1 3 3v5z" fill="#0c78cf" /><path d="M10 25h12" stroke="#0a4f96" strokeWidth="1.500" /></App32>
      <App32 run>
        <circle cx="16" cy="16" r="15" fill="#fbc116" /><path d="M16 16L3 8.500A15 15 0 0 1 29 8.500H16z" fill="#e33b2e" /><path d="M16 16L9.500 19.700 3 8.500A15 15 0 0 0 15 31l6.500-11.300z" fill="#1e9e4a" /><path d="M16 31l6.500-11.200L16 16z" fill="#fbc116" />
        <circle cx="16" cy="16" r="7.500" fill="#fff" /><circle cx="16" cy="16" r="5.800" fill="#2f7de9" />
      </App32>
      <App32 run><circle cx="16" cy="16" r="15" fill="#0f64b5" /><path d="M1 15C2 5 9 1 16 1c9 0 15 6 15 13 0 5-4 7-8 7s-5-2-4-3c3-5-1-9-7-9C6 9 2 12 1 15z" fill="url(#edge)" /><path d="M11 14c-4 5-1 13 7 15 4 1 8-1 11-5-5 2-13 1-14-6 0-2 1-3 1-4-1-1-3-1-5 0z" fill="#0c4a86" /></App32>
      <App32><path d="M10 8V4a1.500 1.500 0 0 1 1.500-1.500h9A1.500 1.500 0 0 1 22 4v4" stroke="#28a8ea" strokeWidth="2.200" /><path d="M1.500 6h29v20a5 5 0 0 1-5 5h-19a5 5 0 0 1-5-5z" fill="#f3f3f3" /><path d="M10 12.500h5.500V18H10z" fill="#e5461f" /><path d="M16.500 12.500H22V18h-5.500z" fill="#6ab51c" /><path d="M10 19h5.500v5.500H10z" fill="#1496e0" /><path d="M16.500 19H22v5.500h-5.500z" fill="#f5b50f" /></App32>
      <App32><path d="M6 13L18 3l13 9v14a3 3 0 0 1-3 3H10a4 4 0 0 1-4-4z" fill="#2393dd" /><path d="M14 20L31 12v14a3 3 0 0 1-3 3H9z" fill="#45c8f5" /><path d="M14 14l14-6 3 4-15 12z" fill="#1a4a9e" /><rect x="1" y="9" width="15" height="15" rx="2" fill="#0f5fb4" /><circle cx="8.500" cy="16.500" r="4" stroke="#fff" strokeWidth="2" /></App32>
      <div className="relative">
        <App32 run><path d="M16 2a14 14 0 1 1-6.500 26.300L2 30l2-7A14 14 0 0 1 16 2z" stroke="#25d366" strokeWidth="2.800" /><path d="M10.500 9.500c1-1 2-.5 2.500 1s.5 2-.5 3c1.500 3 3 4.300 5.500 5.500 1-1.500 1.500-1.800 3-1 2 1 2.500 1.500 1.500 3-2 3-6 1.500-9-1S8 13 10.500 9.500z" fill="#25d366" /></App32>
        <div className="absolute top-[2px] right-[5px] flex size-[22px] items-center justify-center rounded-full bg-[#4cc2ff] text-[12px] text-[#111]">10</div>
      </div>
      <App32><path d="M1 1h30v30H1z" fill="#0061fe" /><path d="M11.500 8L16 11l-4.500 3L7 11zM20.500 8l4.500 3-4.500 3-4.500-3zM11.500 14l4.500 3-4.500 3L7 17zM20.500 14l4.500 3-4.500 3-4.500-3zM16 18.500l4.500 3-4.500 3-4.500-3z" fill="#fff" /></App32>
      <App32><path d="M3 3h26v14L16 30H3z" fill="#ffd60a" /><path d="M16 17h13L16 30z" fill="#454545" /><path d="M29 17v13H16z" fill="#e9a90c" /></App32>
      <App32><path d="M1 1h30v30H1z" fill="#b68b53" /><path d="M1 27h30v4H1z" fill="#6b4526" /><path d="M6 5h20v22H6z" fill="#181818" /><path d="M5.500 8h6v19h-6z" fill="#d9141a" /><path d="M5.500 12h6v4h-6z" fill="#eee" /><path d="M12 10h4v17h-4z" fill="#f07a24" /><path d="M16 5h7v22h-7z" fill="#1e6fe0" /><path d="M23 8h4v19h-4z" fill="#5aa02c" /></App32>
      <App32 run>
        <rect x="1.500" y="1.500" width="29" height="30" rx="7" fill="#0c0c0e" />
        <ellipse cx="10.800" cy="16.500" rx="4" ry="7.200" transform="rotate(-20 10.800 16.500)" stroke="url(#webex)" strokeWidth="4" />
        <ellipse cx="21" cy="16.500" rx="4" ry="7.200" transform="rotate(22 21 16.500)" stroke="#2f62f2" strokeWidth="4" />
        <circle cx="24" cy="11" r="3.600" fill="#52cf5c" />
      </App32>
      <App32 run><rect x="2.500" y="2.500" width="27" height="26" rx="4.500" fill="#b30b00" /><path d="M8 22.500c3-1 8-8 8-14 0-2-2-1.500-1.500.5.800 5 5 9 8.500 9.500 2.500 0 1.500-2.500-3-2s-9 2.500-11.500 5c-.8.900-.8 1.400-.5 1z" stroke="#fff" strokeWidth="1.700" /></App32>
      <App32 active><path d="M2 2h28v28H2z" fill="#f6f6f6" />{crossMark("#2a6f9e")}</App32>
      <App32 run><rect x="1" y="1" width="23" height="22" rx="3" fill="#f1f1f1" /><rect x="4.500" y="4.500" width="14" height="14" stroke="#d83b01" strokeWidth="3" strokeDasharray="3.500 2" /><path d="M19 6v16M9 20h15" stroke="#8b9196" strokeWidth="3" /><circle cx="28" cy="17" r="3" stroke="#1d93e0" strokeWidth="2" /><circle cx="17.500" cy="28" r="3" stroke="#1d93e0" strokeWidth="2" /><path d="M19 25.500l2-5M22 21l4-3" stroke="#1d93e0" strokeWidth="2" /></App32>
      <App32 run><rect x="2.500" y="3" width="27" height="27" rx="3.500" fill="url(#photo)" /><path d="M3 23l9.500-9.500a3.500 3.500 0 0 1 5 0L29 24.500v2a3.500 3.500 0 0 1-3.500 3.500h-19A3.500 3.500 0 0 1 3 26.500z" fill="#2bb5f2" /><path d="M10 30l6-7 13 4a3.500 3.500 0 0 1-3.500 3z" fill="#0f73c9" /><circle cx="22.500" cy="8" r="2.500" fill="#fff" /></App32>
      <App32 run><path d="M2.500 3h27v26h-27z" fill="#1f6391" stroke="#e9eef2" />{crossMark("#dcebf5")}</App32>

      <div className="ml-auto flex items-center pr-[26px] pb-px">
        <Ico size={14} className="text-white"><path d="M1 10l6-6.500 6 6.500" strokeWidth="1.800" /></Ico>
        <div className="ml-[26px] w-[34px] text-center text-[14px] leading-[20px]">ENG<br />IN</div>
        <Ico size={20} className="ml-5 text-white"><path d="M1 8a13 13 0 0 1 18 0M4 11.200a9 9 0 0 1 12 0M7 14.200a4.800 4.800 0 0 1 6 0" strokeWidth="1.500" /><circle cx="10" cy="16.800" r="1.300" fill="#fff" /></Ico>
        <Ico size={20} className="ml-[9px] text-white"><path d="M1.500 7.500v5h3l5 4.500V3l-5 4.500zM12 7.500a3.500 3.500 0 0 1 0 5M14 5a7 7 0 0 1 0 10" strokeWidth="1.400" /><path d="M16.500 3a10 10 0 0 1 0 14" stroke="#77777a" /></Ico>
        <Ico size={20} className="ml-[11px] text-white"><rect x="3" y="5" width="14" height="11" rx="2.500" strokeWidth="1.500" /><rect x="5.500" y="8" width="9" height="5.500" fill="#fff" stroke="none" /><path d="M18.800 8.500v4" strokeWidth="2" /><path d="M4.500 1L0.500 8h3l-.8 5L8 6H4.500L6 1z" fill="#fff" stroke="#222" strokeWidth="0.800" /></Ico>
        <div className="ml-[14px] w-[85px] text-right text-[14px] leading-[20px] whitespace-nowrap"><span>21:01</span><br /><span className="tracking-[0.400px]">09-03-2025</span></div>
        <svg width="18" height="22" viewBox="0 0 18 22" className="ml-[10px]"><path d="M8 2c-4 0-5.500 3-5.500 6v5L.5 16.500h15L13.500 13V8C13.500 5 12 2 8 2z" fill="#fff" /><path d="M5.500 17.500a2.600 2.600 0 0 0 5 0z" fill="#fff" /><path d="M6 8h4.500L6 13h4.500" stroke="#222" strokeWidth="1.400" fill="none" /><path d="M12 2.500h4.500L12 7.500h4.500" stroke="#222" strokeWidth="3" fill="none" /><path d="M12 2.500h4.500L12 7.500h4.500" stroke="#fff" strokeWidth="1.400" fill="none" /></svg>
      </div>
    </div>
  );
}

export default function App() {
  return (
    <div className={"flex h-[1080px] w-[1920px] flex-col overflow-hidden bg-[#f4f4f4] " + SANS}>
      <TitleBar />
      <MenuBar />
      <Toolbar />
      <div className="flex h-[851px] shrink-0">
        <SideRail />
        <div className="flex flex-1 flex-col">
          <DeviceBar />
          <div className="flex flex-1">
            <Dashboard />
            <div className="ml-auto flex w-[20px] justify-center border-l border-white bg-[#eeeeee] pt-5 pr-px">
              <div className="h-[732px] w-[3px] rounded-full bg-[#858585]" />
            </div>
          </div>
        </div>
      </div>
      <SheetTabs />
      <StatusBar />
      <Taskbar />
    </div>
  );
}
